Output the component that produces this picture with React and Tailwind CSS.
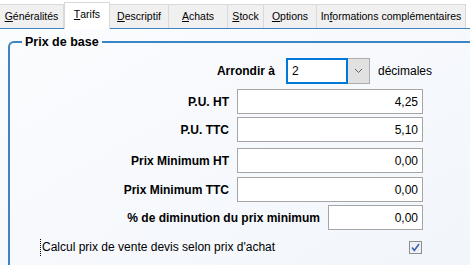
import React from 'react';

const tabs = [
  { key: 'gen', w: 'w-[64px]', label: <><u>G</u>énéralités</> },
  { key: 'tar', w: 'w-[46px]', label: <><u>T</u>arifs</>, active: true },
  { key: 'des', w: 'w-[59px]', label: <><u>D</u>escriptif</> },
  { key: 'ach', w: 'w-[59px]', label: <><u>A</u>chats</> },
  { key: 'sto', w: 'w-[36px]', label: <><u>S</u>tock</> },
  { key: 'opt', w: 'w-[53px]', label: <><u>O</u>ptions</> },
  { key: 'inf', w: 'w-[149px]', label: <>In<u>f</u>ormations complémentaires</> },
];

const Field = ({ label, value, mt, w = 'w-[186px]' }) => (
  <div className={`flex items-center justify-end gap-[8px] ${mt}`}>
    <span className="font-bold">{label}</span>
    <div
      className={`${w} h-[25px] border border-[#a5a5a5] bg-white flex items-center justify-end pr-[4px]`}
    >
      {value}
    </div>
  </div>
);

const App = () => {
  return (
    <div
      className="w-[470px] h-[265px] overflow-hidden bg-white text-[12px] text-black flex flex-col"
      style={{ fontFamily: '"Liberation Sans", Arial, sans-serif' }}
    >
      {/* onglets */}
      <div className="flex items-end h-[29px] pt-[3px] border-b border-[#3c84c4]">
        {tabs.map((t) =>
          t.active ? (
            <div
              key={t.key}
              className={`${t.w} h-[27px] -mb-px bg-white border border-b-0 border-[#d9d9d9] flex items-center justify-center text-[10.5px] pb-[2px]`}
            >
              {t.label}
            </div>
          ) : (
            <div
              key={t.key}
              className={`${t.w} h-[24px] bg-[#f0f0f0] border-t border-r border-[#d9d9d9] flex items-center justify-center text-[10.5px] whitespace-nowrap`}
            >
              {t.label}
            </div>
          )
        )}
      </div>

      {/* panneau */}
      <div className="flex-1 bg-gradient-to-br from-[#fbfcfe] to-[#f1f5fb] pl-[8px]">
        <fieldset className="mt-[5px] border-t-2 border-l-2 border-[#3c84c4] rounded-tl-[6px] h-[260px] pr-[47px]">
          <legend className="ml-[12px] px-[3px] font-bold text-[12.5px] leading-[16px]">
            Prix de base
          </legend>

          <div className="flex items-center justify-end mt-[8px] -mr-[9px]">
            <span className="font-bold mr-[11px]">Arrondir à</span>
            <div className="flex h-[26px] w-[84px]">
              <div className="flex-1 border-2 border-[#0078d7] bg-white flex items-center pl-[4px]">
                2
              </div>
              <div className="w-[22px] border border-l-0 border-[#adadad] bg-[#e1e1e1] flex items-center justify-center">
                <svg width="9" height="6" viewBox="0 0 9 6">
                  <path d="M1 1 L4.5 4.5 L8 1" fill="none" stroke="#606060" strokeWidth="1" />
                </svg>
              </div>
            </div>
            <span className="ml-[8px]">décimales</span>
          </div>

          <Field label="P.U. HT" value="4,25" mt="mt-[5px]" />
          <Field label="P.U. TTC" value="5,10" mt="mt-[3px]" />
          <Field label="Prix Minimum HT" value="0,00" mt="mt-[6px]" />
          <Field label="Prix Minimum TTC" value="0,00" mt="mt-[4px]" />
          <Field
            label="% de diminution du prix minimum"
            value="0,00"
            mt="mt-[3px]"
            w="w-[95px]"
          />

          <div className="flex items-center justify-between mt-[9px] pl-[30px] pr-[1px]">
            <span className="border-l border-dotted border-black pl-[1px] leading-[17px]">
              Calcul prix de vente devis selon prix d'achat
            </span>
            <svg width="13" height="13" viewBox="0 0 13 13">
              <rect x="0.5" y="0.5" width="12" height="12" fill="#eef1f6" stroke="#8e8e8e" />
              <path
                d="M3 6.5 L5.3 9.5 L10 3"
                fill="none"
                stroke="#4060b0"
                strokeWidth="1.6"
              />
            </svg>
          </div>
        </fieldset>
      </div>
    </div>
  );
};

export default App;
